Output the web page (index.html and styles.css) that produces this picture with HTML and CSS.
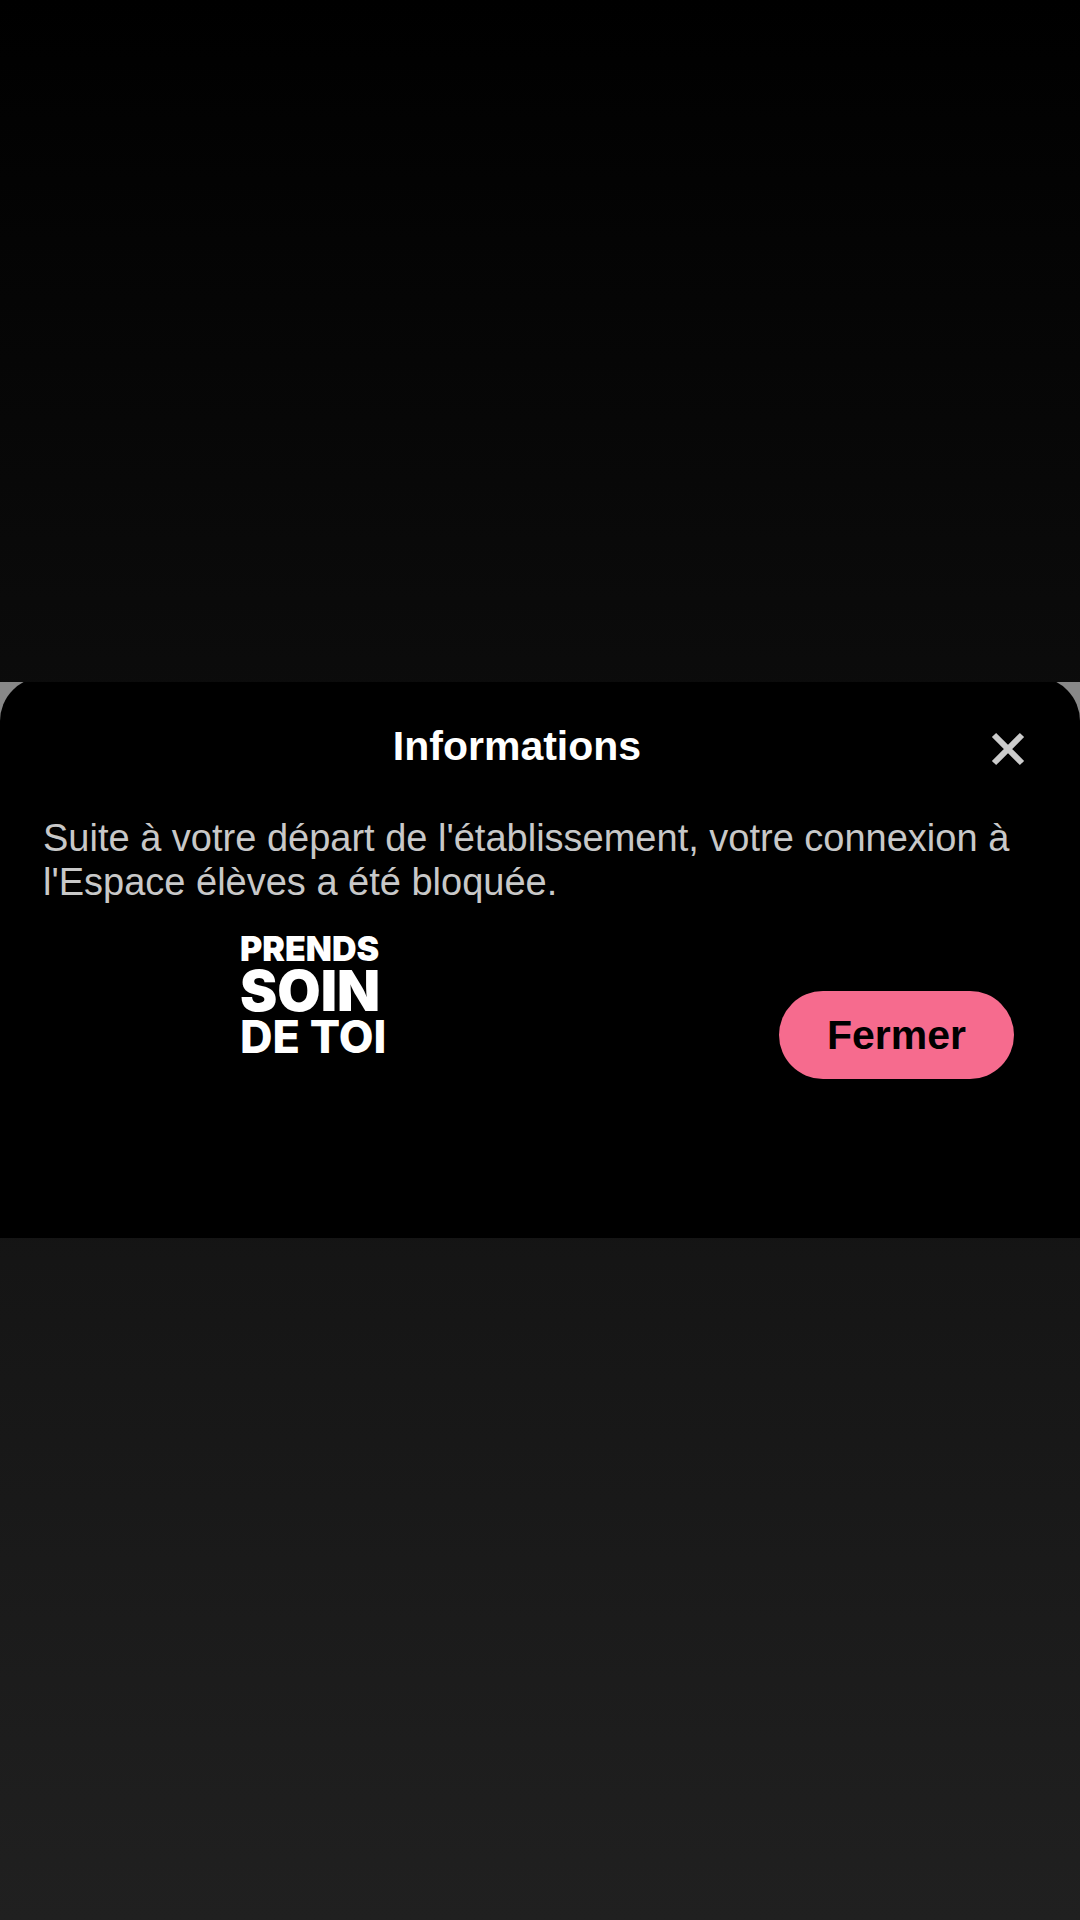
FILE: index.html
```html
<!DOCTYPE html>
<html lang="fr">
<head>
    <meta charset="UTF-8">
    <meta name="viewport" content="width=device-width, initial-scale=1.0">
    <title>Informations</title>
    <link rel="stylesheet" href="styles.css">
</head>
<body>

<div class="backdrop">
    <div class="dialog" role="dialog" aria-labelledby="dialog-title">
        <div class="header">
            <h2 id="dialog-title">Informations</h2>
            <button type="button" class="close" aria-label="Fermer la fenêtre">
                <svg viewBox="0 0 34 34">
                    <path d="M3 3 L31 31 M31 3 L3 31"/>
                </svg>
            </button>
        </div>
        <p class="message">Suite à votre départ de l'établissement, votre connexion à l'Espace élèves a été bloquée.</p>
        <div class="footer">
            <div class="logo">
                <span class="small">PRENDS</span>
                <span class="big">SOIN</span>
                <span class="medium">DE TOI</span>
            </div>
            <button type="button" class="button">Fermer</button>
        </div>
    </div>
</div>

</body>
</html>
```
FILE: styles.css
```css
body {
    font-family: "Liberation Sans", Arial, sans-serif;
    background: linear-gradient(#000, #202020);
    display: flex;
    flex-direction: column;
    justify-content: center;
    min-height: 100vh;
    margin: 0;
}
.backdrop {
    background-color: #888;
    overflow: hidden;
}
.dialog {
    background-color: #000;
    border-radius: 44px 44px 0 0;
    margin-top: -5px;
    padding: 45px 45px 159px 43px;
}
.header {
    display: flex;
    align-items: center;
    padding-right: 10px;
}
.header h2 {
    flex: 1;
    margin: 0;
    color: #fff;
    font-size: 41px;
    line-height: 48px;
    text-align: center;
}
.close {
    display: flex;
    padding: 0;
    border: none;
    background: none;
    cursor: pointer;
}
.close svg {
    width: 34px;
    height: 34px;
    margin-top: 6px;
    fill: none;
    stroke: #ccc;
    stroke-width: 6;
}
.message {
    margin: 46px 0 27px 0;
    color: #c8c8c8;
    font-size: 38px;
    line-height: 44px;
}
.footer {
    display: flex;
    justify-content: space-between;
    align-items: flex-end;
    padding: 0 21px 0 197px;
}
.logo {
    display: flex;
    flex-direction: column;
    margin-bottom: 20px;
    color: #fff;
    font-family: Inter, sans-serif;
    font-weight: 800;
}
.small {
    font-size: 34px;
    font-weight: 900;
    line-height: 36px;
}
.big {
    font-size: 56px;
    font-weight: 900;
    line-height: 48px;
}
.medium {
    font-size: 45px;
    line-height: 44px;
}
.button {
    padding: 20px 48px;
    border: none;
    border-radius: 44px;
    background-color: #f66b8e;
    color: #000;
    font-family: inherit;
    font-size: 41px;
    font-weight: bold;
    line-height: 48px;
    cursor: pointer;
}
```
